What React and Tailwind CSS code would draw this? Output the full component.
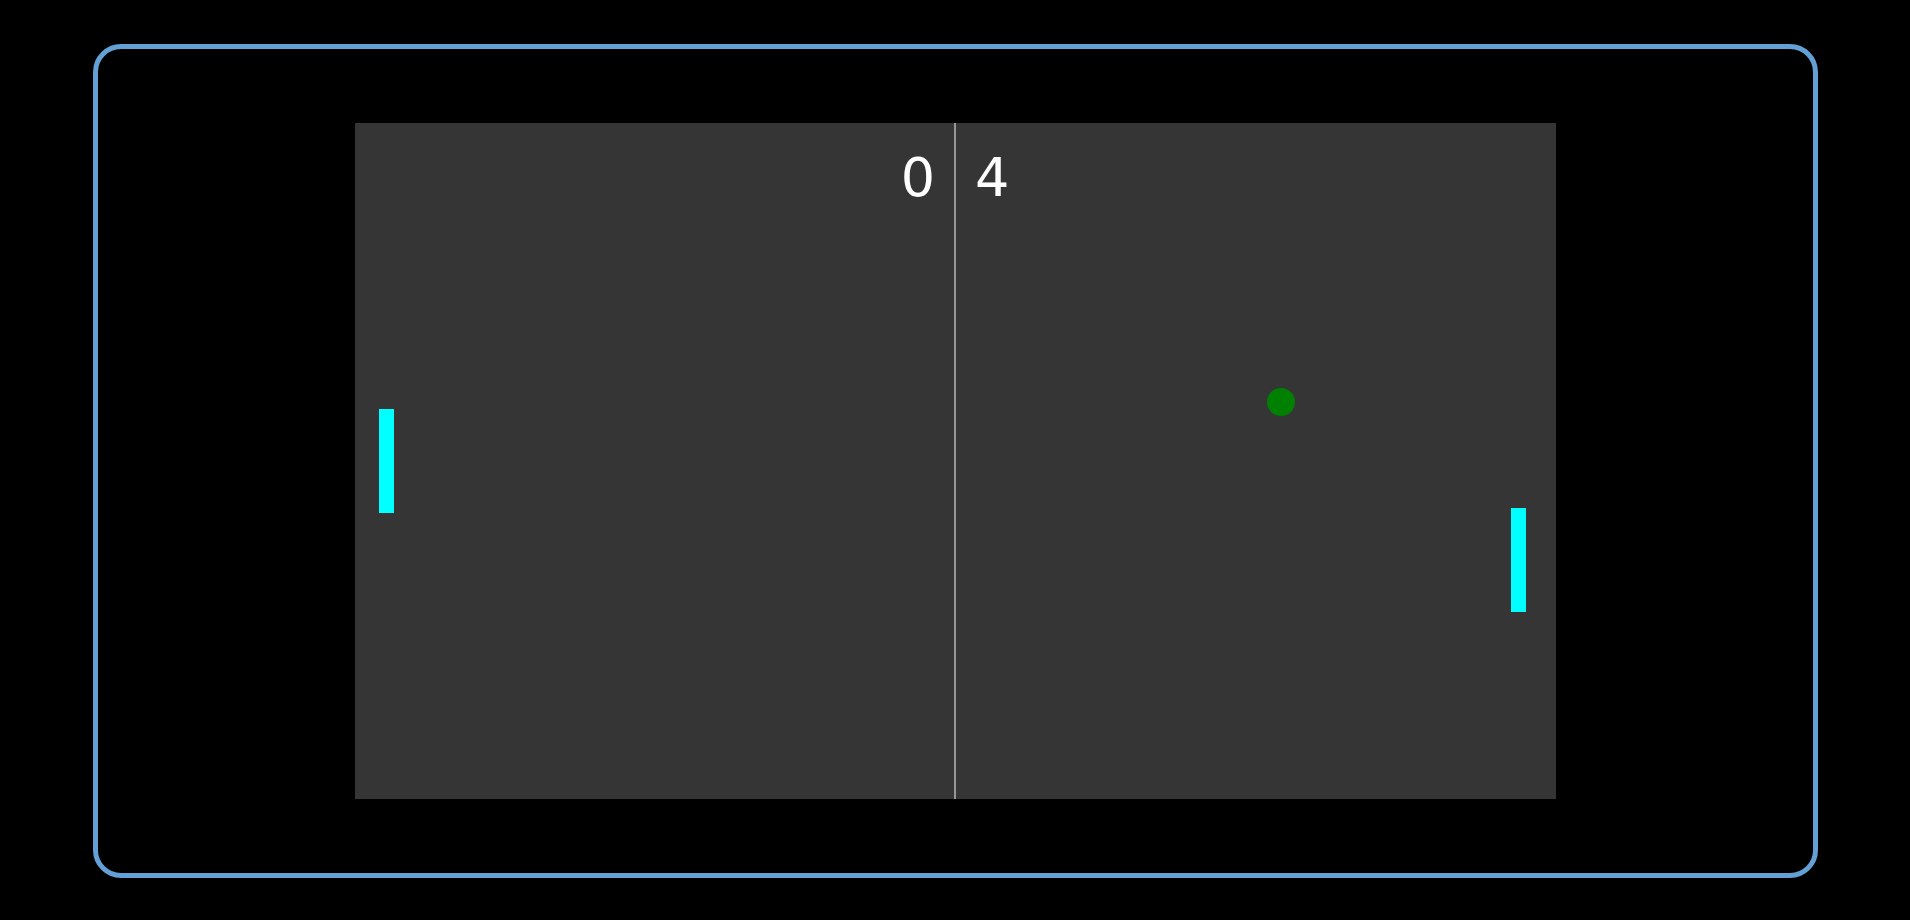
export default function App() {
  return (
    <div className="w-full h-[920px] bg-black pt-[44px] pl-[93px] overflow-hidden">
      <div className="w-[1725px] h-[834px] border-[5px] border-[#62a0d5] rounded-[28px] flex items-center justify-center">
        {/* court: a free canvas, game objects sit at their own coordinates */}
        <div className="relative w-[1201px] h-[676px] bg-[#353535] overflow-hidden">
          {/* net */}
          <div className="absolute top-0 bottom-0 left-[599px] w-[2px] bg-[#969696]"></div>

          {/* scores */}
          <div className="absolute top-[28px] right-[621px] text-white text-[54px] leading-none font-['DejaVu_Sans',Verdana,sans-serif]">
            0
          </div>
          <div className="absolute top-[28px] left-[620px] text-white text-[54px] leading-none font-['DejaVu_Sans',Verdana,sans-serif]">
            4
          </div>

          {/* paddles */}
          <div className="absolute left-[24px] top-[286px] w-[15px] h-[104px] bg-[#00ffff]"></div>
          <div className="absolute left-[1156px] top-[385px] w-[15px] h-[104px] bg-[#00ffff]"></div>

          {/* ball */}
          <div className="absolute left-[912px] top-[265px] w-[28px] h-[28px] rounded-full bg-[#008000]"></div>
        </div>
      </div>
    </div>
  )
}
